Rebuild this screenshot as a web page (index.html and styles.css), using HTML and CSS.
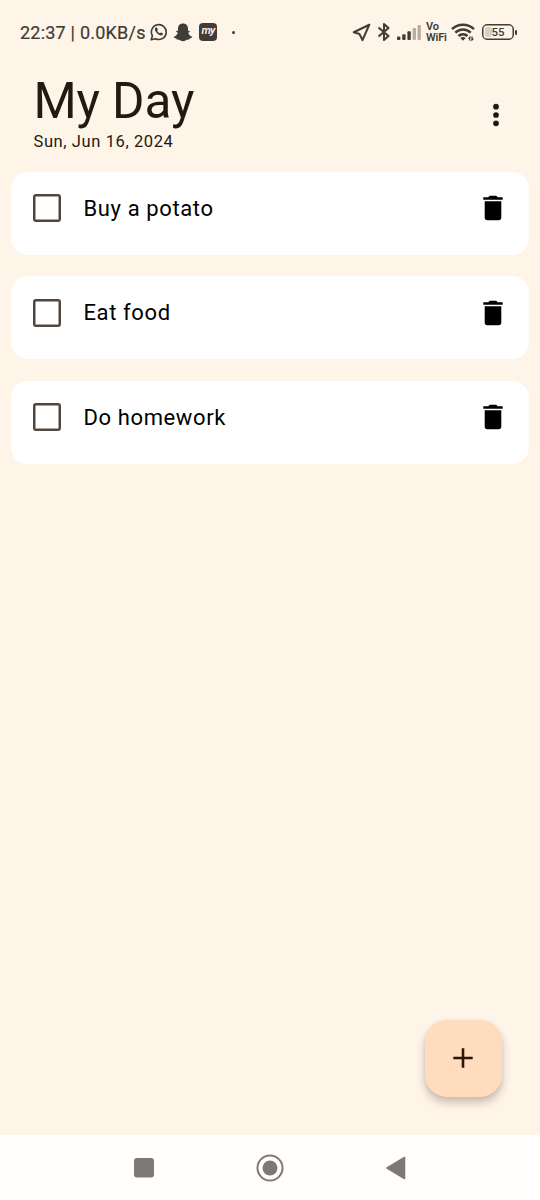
FILE: index.html
```html
<!DOCTYPE html>
<html lang="en">
<head>
<meta charset="utf-8">
<title>My Day</title>
<link rel="stylesheet" href="styles.css">
</head>
<body>
<div class="screen">
  <div class="status">
    <span class="clock">22:37 | 0.0KB/s</span>
    <svg class="whatsapp" width="18" height="18" viewBox="0 0 18 18"><path d="M1.2 16.8l1.200-4A7.400 7.400 0 1 1 5.500 15.700z" fill="none" stroke="#403c37" stroke-width="1.6" stroke-linejoin="round"/><path d="M5.800 4.600c-1.600 1.300-.9 3.300.8 5.200 2 2.200 4.600 3.500 6 2 .8-.9.500-1.200-.2-1.600l-1.100-.6c-.5-.2-.7 0-1.200.7-.6.200-2.900-1.600-2.900-2.500.6-.6.8-.9.600-1.400l-.6-1.400c-.3-.7-.8-.8-1.400-.4z" fill="#403c37"/></svg>
    <svg class="snap" width="20" height="19" viewBox="0 0 20 19"><path d="M10 .5c3.200 0 5 2.200 5 5v2.300c.8-.2 1.700-.2 1.900.5.100.8-1.500 1-1.600 1.700.5 1.900 2 3.200 3.900 3.700.3 1-1.200 1.400-2.400 1.600l-.5 1.300c-1.300-.2-2.400-.1-3.300.6-1.900 1.500-4.100 1.500-6 0-.9-.7-2-.8-3.300-.6l-.5-1.300C2 15.100.5 14.700.8 13.700c1.900-.5 3.400-1.800 3.900-3.700C4.600 9.300 3 9.100 3.100 8.300c.2-.7 1.100-.7 1.900-.5V5.500c0-2.800 1.800-5 5-5z" fill="#403c37"/></svg>
    <span class="my">my</span>
    <span class="more-dot"></span>
    <span class="grow"></span>
    <svg class="location" width="19" height="19" viewBox="0 0 19 19"><path d="M17.300 1.700L1.800 9.200l5.700 1.900 3 6z" fill="none" stroke="#403c37" stroke-width="2.100" stroke-linejoin="round"/></svg>
    <svg class="bluetooth" width="14" height="20" viewBox="0 0 14 20"><path d="M1.500 5.500l10 8.500L7 18V2l4.500 4-10 8.500" fill="none" stroke="#403c37" stroke-width="2.100" stroke-linejoin="round"/></svg>
    <svg class="signal" width="24" height="17" viewBox="0 0 24 17"><g fill="#403c37"><rect x="0" y="12.500" width="3.400" height="3.500" rx="1"/><rect x="5.200" y="10.300" width="3.400" height="5.700" rx="1"/><rect x="10.400" y="7.300" width="3.400" height="8.700" rx="1"/></g><g fill="#b8aea3"><rect x="15.600" y="4" width="3.400" height="12" rx="1"/><rect x="20.500" y="1" width="3.400" height="15" rx="1"/></g></svg>
    <span class="vowifi"><span>Vo</span><span>WiFi</span></span>
    <svg class="wifi" width="24" height="20" viewBox="0 0 24 20"><g fill="none" stroke="#403c37" stroke-width="2.500"><path d="M1 7.200C7 1.300 17 1.300 23 7.200"/><path d="M4.300 10.700c4.400-4.300 11-4.300 15.400 0"/><path d="M7.500 14c2.500-2.500 6.500-2.500 9 0"/></g><path d="M9.300 16c1.500-1.300 3.900-1.300 5.400 0L12 18.700z" fill="#403c37"/><path d="M18.800 18.700v-3.500l-1.400 1.400M21 14.500V18l1.400-1.400" fill="none" stroke="#403c37" stroke-width="1.200"/></svg>
    <span class="battery"><span class="charge"></span><span class="percent">55</span></span><span class="battery-tip"></span>
  </div>
  <header class="header">
    <div>
      <h1 class="title">My Day</h1>
      <p class="date">Sun, Jun 16, 2024</p>
    </div>
    <svg class="menu" width="8" height="24" viewBox="0 0 8 24"><g fill="#211a13"><circle cx="4" cy="3.700" r="2.850"/><circle cx="4" cy="12" r="2.850"/><circle cx="4" cy="20.300" r="2.850"/></g></svg>
  </header>
  <main class="tasks">
    <div class="task"><span class="check"></span><span class="name">Buy a potato</span><svg class="trash" width="20" height="26" viewBox="0 0 20 26"><path d="M.3 2.300h4.900L6.800.7h6.400l1.600 1.600h4.900v2.500H.3zM1.700 6.200h16.600v16.300q0 2.700-2.700 2.700H4.400q-2.700 0-2.700-2.700z"/></svg></div>
    <div class="task"><span class="check"></span><span class="name">Eat food</span><svg class="trash" width="20" height="26" viewBox="0 0 20 26"><path d="M.3 2.300h4.900L6.800.7h6.400l1.600 1.600h4.900v2.500H.3zM1.700 6.200h16.600v16.300q0 2.700-2.700 2.700H4.400q-2.700 0-2.700-2.700z"/></svg></div>
    <div class="task"><span class="check"></span><span class="name">Do homework</span><svg class="trash" width="20" height="26" viewBox="0 0 20 26"><path d="M.3 2.300h4.900L6.800.7h6.400l1.600 1.600h4.900v2.500H.3zM1.700 6.200h16.600v16.300q0 2.700-2.700 2.700H4.400q-2.700 0-2.700-2.700z"/></svg></div>
  </main>
  <div class="fab"><svg width="20" height="20" viewBox="0 0 20 20"><path d="M10 .3v19.400M.3 10h19.400" stroke="#2b1608" stroke-width="2.600"/></svg></div>
  <nav class="nav">
    <svg width="28" height="28" viewBox="0 0 28 28"><rect x="4" y="4" width="20" height="19.500" rx="3" fill="#7b7a78"/></svg>
    <svg width="28" height="28" viewBox="0 0 28 28"><circle cx="14" cy="14" r="12.500" fill="none" stroke="#7b7a78" stroke-width="2"/><circle cx="14" cy="14" r="7.500" fill="#7b7a78"/></svg>
    <svg width="28" height="28" viewBox="0 0 28 28"><path d="M22.500 3.500v21L5 14z" fill="#7b7a78" stroke="#7b7a78" stroke-width="1.500" stroke-linejoin="round"/></svg>
  </nav>
</div>
</body>
</html>
```
FILE: styles.css
```css
* { box-sizing: border-box; }
body { margin: 0; font-family: Roboto, sans-serif; background: #fff4e8; }
.screen { position: relative; width: 540px; height: 1200px; display: flex; flex-direction: column; overflow: hidden; }
svg { display: block; flex: none; }
.status { height: 64px; padding: 0 23px 0 20px; display: flex; align-items: center; color: #403c37; }
.clock { width: 130px; font-size: 18px; line-height: 24px; white-space: nowrap; letter-spacing: 0.220px; padding-top: 2px; -webkit-text-stroke: 0.200px #403c37; }
.snap { margin-left: 5px; }
.my { width: 18px; height: 18px; margin-left: 6px; border-radius: 4px; background: #403c37; color: #fff4e8; font-size: 11px; font-weight: 600; font-style: italic; line-height: 15px; text-align: center; letter-spacing: -0.800px; }
.more-dot { width: 3px; height: 3px; margin-left: 15px; border-radius: 50%; background: #403c37; }
.grow { flex: 1; }
.bluetooth { margin-left: 6px; }
.signal { margin-left: 6px; }
.vowifi { width: 22px; margin-left: 5px; display: flex; flex-direction: column; font-size: 11px; font-weight: 600; line-height: 11px; white-space: nowrap; letter-spacing: -0.150px; }
.wifi { margin-left: 3px; }
.battery { position: relative; width: 32px; height: 16px; margin-left: 7px; border: 1px solid #403c37; box-shadow: inset 0 0 0 0.500px #403c37; border-radius: 5px; text-align: center; }
.charge { position: absolute; left: 2px; top: 2px; width: 7px; height: 10px; border-radius: 2px; background: #d8d0c6; }
.percent { position: relative; display: block; font-size: 11.500px; line-height: 14px; font-weight: 500; }
.battery-tip { width: 2px; height: 5px; margin-left: 1px; background: #403c37; border-radius: 1px; }
.header { height: 107.500px; padding: 7px 40px 0 33.500px; display: flex; justify-content: space-between; color: #211a13; }
.title { margin: 0; font-size: 49.500px; line-height: 60px; font-weight: 400; letter-spacing: -0.100px; }
.date { margin: 0; font-size: 16.500px; line-height: 22px; letter-spacing: 0.600px; }
.menu { margin-top: 31.500px; }
.tasks { flex: 1; display: flex; flex-direction: column; gap: 21.500px; padding: 0 11px; }
.task { height: 83px; padding: 0 26px 0 22px; display: flex; align-items: flex-start; background: #fff; border-radius: 17px; color: #000; }
.check { width: 28px; height: 28px; margin-top: 22.500px; border: 2px solid #51463e; box-shadow: inset 0 0 0 0.500px #51463e; border-radius: 3px; }
.name { flex: 1; margin: 24px 0 0 22.500px; font-size: 22px; line-height: 26px; letter-spacing: 0.610px; }
.trash { margin-top: 23.500px; }
.fab { position: absolute; left: 424.500px; top: 1019.500px; width: 77px; height: 77px; border-radius: 22px; background: #ffdcbd; display: flex; align-items: center; justify-content: center; box-shadow: 0 6px 9px rgba(70, 50, 30, 0.260), 0 1px 4px rgba(70, 50, 30, 0.080); }
.nav { height: 65px; padding: 0 130px; background: #fffefc; display: flex; align-items: center; justify-content: space-between; }
```
